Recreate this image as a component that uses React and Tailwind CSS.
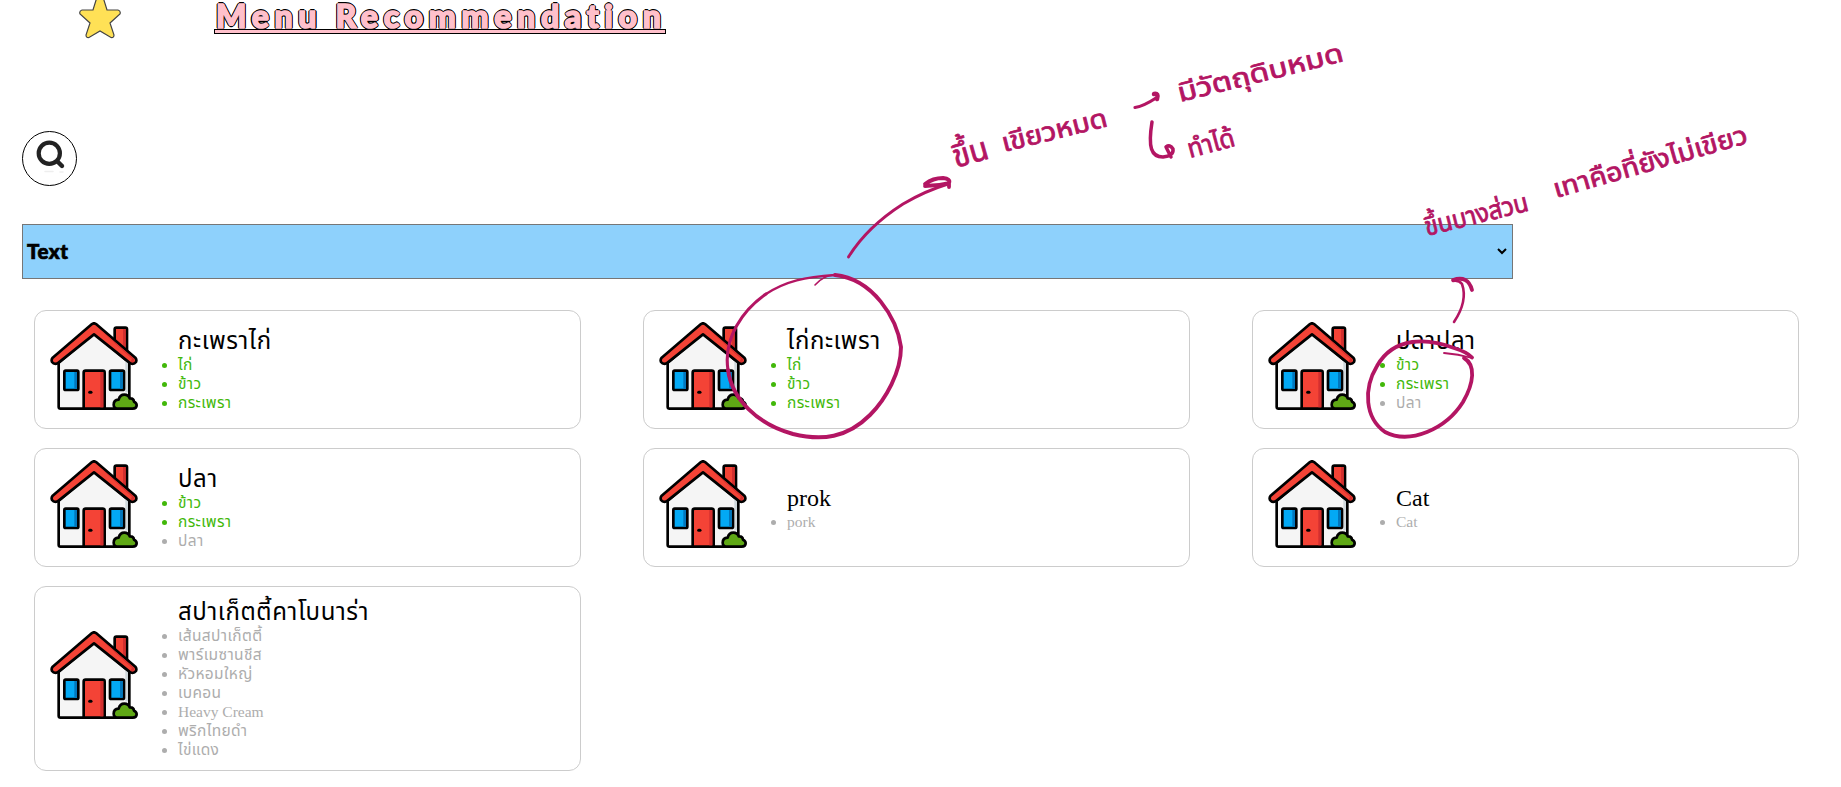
const GREEN = "text-[#42b80a]";
const GRAY = "text-[#adadad]";
const BULLET = "relative before:absolute before:top-[8px] before:-left-4 before:h-[5px] before:w-[5px] before:rounded-full before:bg-current before:content-['']";
const menus = [
  { name: "กะเพราไก่", have: ["ไก่", "ข้าว", "กระเพรา"], miss: [] },
  { name: "ไก่กะเพรา", have: ["ไก่", "ข้าว", "กระเพรา"], miss: [] },
  { name: "ปลาปลา", have: ["ข้าว", "กระเพรา"], miss: ["ปลา"] },
  { name: "ปลา", have: ["ข้าว", "กระเพรา"], miss: ["ปลา"] },
  { name: "prok", latin: true, have: [], miss: ["pork"] },
  { name: "Cat", latin: true, have: [], miss: ["Cat"] },
  { name: "สปาเก็ตตี้คาโบนาร่า", have: [], miss: ["เส้นสปาเก็ตตี้", "พาร์เมซานชีส", "หัวหอมใหญ่", "เบคอน", "Heavy Cream", "พริกไทยดำ", "ไข่แดง"] },
];

function House() {
  return (
    <svg className="-mt-[7px] h-[88px] w-[88px] shrink-0" viewBox="30 36 264 264" stroke="#000" strokeWidth="8" strokeLinejoin="round" strokeLinecap="round">
      <path d="M224 100V58q0-5 5-5h27q5 0 5 5v66z" fill="#f44336" />
      <path d="M249 57h8v59l-8-8z" fill="#d32f2f" stroke="none" />
      <path d="M56 158 162 70 268 158V296H62q-6 0-6-5z" fill="#f5f5f5" />
      <path d="M256 150l8 7v90h-8z" fill="#cfd8dc" stroke="none" />
      <path d="M155 43q7-6 14 0L286 143q5 6 2 13-6 8-17 4L162 73 53 160q-11 4-17-4-3-7 2-13z" fill="#f44336" />
      <path d="M170 50 282 146q2 5-1 9-4 3-9 0l4-9z" fill="#d32f2f" stroke="none" />
      <rect x="73" y="182" width="42" height="58" rx="4" fill="#03a9f4" />
      <path d="M103 186h8v50h-8z" fill="#0277bd" stroke="none" />
      <rect x="210" y="182" width="42" height="58" rx="4" fill="#03a9f4" />
      <path d="M240 186h8v50h-8z" fill="#0277bd" stroke="none" />
      <path d="M131 296V188q0-6 6-6h51q6 0 6 6V296z" fill="#f44336" />
      <path d="M181 186h9v106h-9z" fill="#d32f2f" stroke="none" />
      <path d="M149 247h4" strokeWidth="9" />
      <path d="M235 296q-14 0-14-12 0-14 15-15 4-15 17-15 12 0 16 11 12-1 13 10 8 3 8 11 0 10-12 10z" fill="#5fa815" />
    </svg>
  );
}

function Item({ tone, children }) {
  const spacing = /[a-z]/i.test(children) ? "" : "tracking-[0.35px]";
  return (
    <li className={tone}>
      <div className={`${BULLET} ${spacing}`}>{children}</div>
    </li>
  );
}

function Card({ menu }) {
  return (
    <div className="flex min-h-[119px] items-center rounded-xl border border-[#ccc] py-[11px] pl-[15px]">
      <House />
      <div className="ml-[40px]">
        <h2 className={`h-[28px] text-[24px] leading-[28px] whitespace-nowrap text-black ${menu.latin ? "" : "tracking-[0.6px]"}`}>{menu.name}</h2>
        <ul className="text-[15.5px] leading-[19px]">
          {menu.have.map((t) => <Item key={t} tone={GREEN}>{t}</Item>)}
          {menu.miss.map((t) => <Item key={t} tone={GRAY}>{t}</Item>)}
        </ul>
      </div>
    </div>
  );
}

function Note({ x, y, r, w, size = 26, children }) {
  return (
    <text transform={`translate(${x} ${y}) rotate(${r})`} fontSize={size} textLength={w} lengthAdjust="spacingAndGlyphs" fill="#b31563" stroke="#b31563" strokeWidth="0.8">
      {children}
    </text>
  );
}

function Ink() {
  return (
    <svg className="pointer-events-none absolute top-0 left-0 h-[787px] w-[1841px]" viewBox="0 0 1841 787" fill="none" stroke="#b31563" strokeLinecap="round" strokeLinejoin="round">
      <path d="M848.5 257Q867 227 903 204 925 191 948 184" strokeWidth="2.9" />
      <path d="M925 186Q937 186 949 183 951 179 943 178 933 178 925 184M949 182V187" strokeWidth="3.8" />
      <path d="M1135 107.500Q1144 106 1156 98" strokeWidth="3.2" />
      <path d="M1154 94Q1159 93 1157 99" strokeWidth="4.5" />
      <path d="M1152 122C1148 147 1151 157 1163 157Q1174 156 1173 149 1170 144 1166 147L1171 157" strokeWidth="3.5" />
      <path d="M815 285Q824 275 835 275" strokeWidth="1.6" />
      <path d="M835 275C873 279 897 318 901 347 901 372 886 399 870 415 847 438 822 441 793 434 757 424 732 399 728 370" strokeWidth="3.9" />
      <path d="M728 370C723 338 743 310 766 294" strokeWidth="3.1" />
      <path d="M766 294C786 281 805 277 835 275" strokeWidth="2.4" />
      <path d="M1444 353Q1458 354 1472 358" strokeWidth="1.8" />
      <path d="M1472 357.500Q1467 352 1454 348C1428 338 1394 336 1377 366 1363 389 1365 418 1385 432 1410 445 1446 429 1463 402 1474 383 1476 365 1464 358" strokeWidth="3.8" />
      <path d="M1454 322Q1468 301 1462 284 1459 280 1453 281" strokeWidth="2.6" />
      <path d="M1453 280Q1468 275 1472 290" strokeWidth="3.8" />
      <g stroke="none" className="font-['Noto_Sans_Thai','Noto_Sans',sans-serif]">
        <Note x={956} y={168} r={-16} w={36} size={32}>ขึ้น</Note>
        <Note x={1004} y={152} r={-14} w={108}>เขียวหมด</Note>
        <Note x={1180} y={102} r={-14} w={170}>มีวัตถุดิบหมด</Note>
        <Note x={1190} y={158} r={-15} w={48}>ทำได้</Note>
        <Note x={1427} y={236} r={-14} w={106}>ขึ้นบางส่วน</Note>
        <Note x={1556} y={198} r={-16} w={201}>เทาคือที่ยังไม่เขียว</Note>
      </g>
    </svg>
  );
}

export default function App() {
  return (
    <div className="relative h-[787px] w-[1841px] overflow-hidden bg-white font-['Liberation_Serif','Noto_Sans_Thai',serif]">
      <header className="flex h-[131px] items-start pl-[78px]">
        <svg className="-mt-[8px] h-[47px] w-[44px] shrink-0" viewBox="0 0 44 47">
          <path d="M22 2Q24 2 25 5L29 18 40 18Q43 19 42 22L32 31 36 43Q36 46 33 45.500L22 39 11 45.500Q8 46 8 43L12 31 2 22Q1 19 4 18L15 18 19 5Q20 2 22 2z" fill="#ffe156" stroke="#444" strokeWidth="1.2" />
        </svg>
        <div className="ml-[92px] w-[452px]">
          <h1 className="h-[29px] pl-[2px] font-['Lato'] text-[32px] leading-[31px] font-black tracking-[5.7px] whitespace-nowrap text-[#ffc0cb] [-webkit-text-stroke:1.6px_#ffc0cb] [text-shadow:1.8px_0_#000,-1.8px_0_#000,0_1.8px_#000,0_-1.8px_#000,1.3px_1.3px_#000,-1.3px_1.3px_#000,1.3px_-1.3px_#000,-1.3px_-1.3px_#000]">Menu Recommendation</h1>
          <div className="relative h-[5px] border border-black bg-[#ffc0cb]" />
        </div>
      </header>
      <button className="ml-[22px] flex h-[55px] w-[55px] items-center justify-center rounded-full border border-black bg-white">
        <svg className="h-[53px] w-[53px]" viewBox="23 132 53 53" fill="none" stroke="#222" strokeLinecap="round">
          <circle cx="49.3" cy="153.300" r="10.6" strokeWidth="4.2" />
          <path d="M57.500 161.500l4.500 4.500" strokeWidth="4.4" />
          <path d="M45 171.500h8M60 172h3" stroke="#eee" strokeWidth="1.5" />
        </svg>
      </button>
      <div className="mt-[38px] ml-[22px] flex h-[55px] w-[1491px] items-center justify-between border border-[#767676] bg-[#8ed1fc] pr-[5px] pl-[4px]">
        <span className="-mt-px font-['Lato'] text-[20.5px] font-black tracking-[0.5px] text-black [-webkit-text-stroke:0.7px_black]">Text</span>
        <svg className="-mt-[1px] h-[10px] w-[10px]" viewBox="0 0 10 10" fill="none" stroke="#000" strokeWidth="2"><path d="M1 3l4 4 4-4" /></svg>
      </div>
      <main className="mt-[31px] ml-[34px] grid w-[1765px] grid-cols-3 gap-x-[62px] gap-y-[19px]">
        {menus.map((m) => <Card key={m.name} menu={m} />)}
      </main>
      <Ink />
    </div>
  );
}
